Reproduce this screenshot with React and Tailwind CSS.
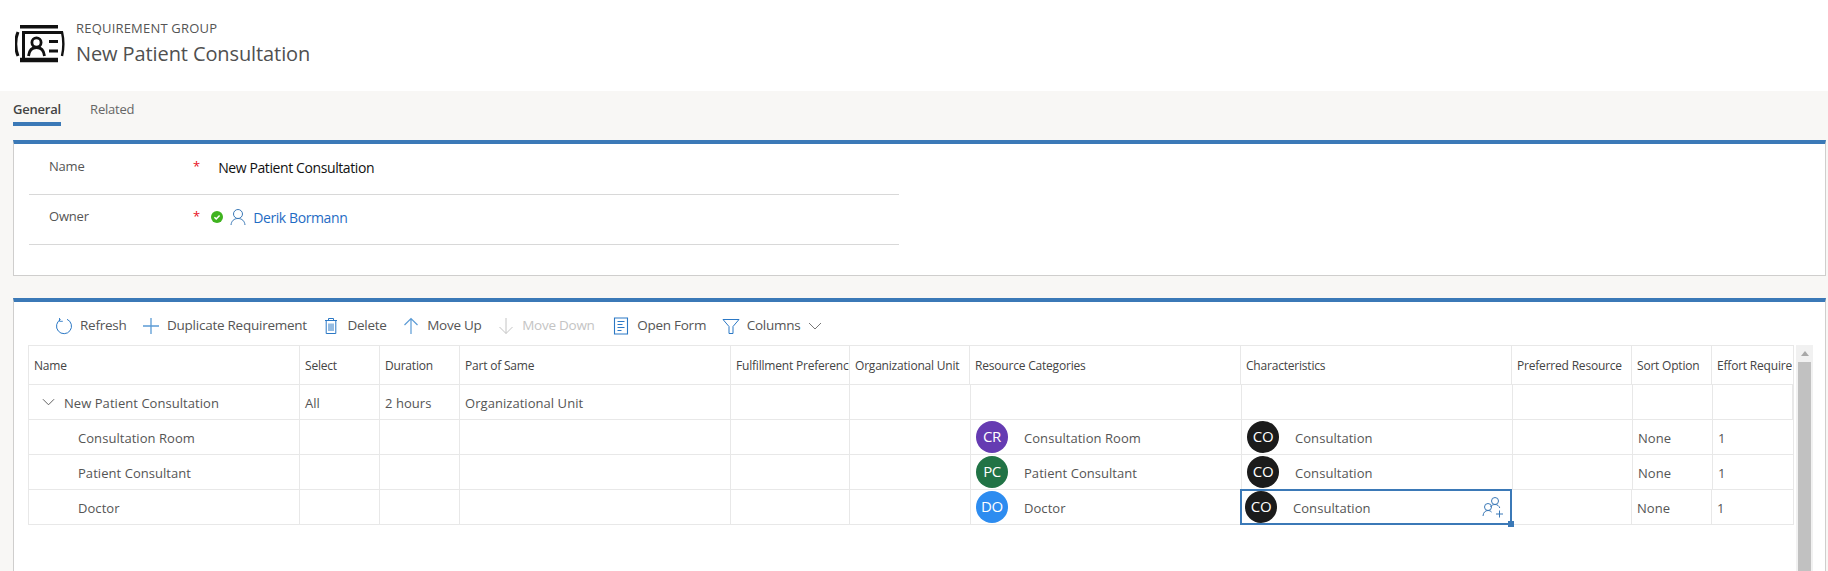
import React from "react";

const FONT = "font-['Open_Sans','Noto_Sans',sans-serif]";

const HEAD_COLS = "grid-cols-[271px_80px_80px_271px_119px_120px_271px_271px_120px_80px_80px]";
const BODY_COLS = "grid-cols-[271px_80px_80px_271px_119px_121px_271px_271px_120px_80px_80px]";
const SELECTED_COLS = "grid-cols-[271px_80px_80px_271px_119px_121px_270px_271px_120px_80px_80px]";

const headers = [
  "Name",
  "Select",
  "Duration",
  "Part of Same",
  "Fulfillment Preference",
  "Organizational Unit",
  "Resource Categories",
  "Characteristics",
  "Preferred Resource",
  "Sort Option",
  "Effort Required",
];

const rows = [
  { name: "Consultation Room", initials: "CR", color: "bg-[#653bb2]" },
  { name: "Patient Consultant", initials: "PC", color: "bg-[#217346]" },
  { name: "Doctor", initials: "DO", color: "bg-[#2d8cf0]", selected: true },
];

const Cell = ({ className = "", children }) => (
  <div className={`flex items-center min-w-0 overflow-hidden whitespace-nowrap border-r border-[#e8e8e8] px-[5px] ${className}`}>
    {children}
  </div>
);

// body text sits a little lower than the avatars
const Txt = ({ children }) => <span className="mt-[3px]">{children}</span>;

const Avatar = ({ color, children }) => (
  <span className={`flex items-center justify-center shrink-0 w-8 h-8 rounded-full pb-[2px] text-white text-[15px] tracking-[-0.4px] ${color}`}>
    {children}
  </span>
);

const RecordIcon = () => (
  <svg viewBox="15 25 50 38" className="w-[50px] h-[38px] shrink-0">
    <path d="M20 26.700h38" stroke="#111" strokeWidth="3.600" fill="none" />
    <path d="M20 60h38" stroke="#111" strokeWidth="4.400" fill="none" />
    <path d="M18 32c-3 7-3 17 0 24" stroke="#111" strokeWidth="3" fill="none" />
    <path d="M62 32c1.600 7 1.600 17 0 24" stroke="#111" strokeWidth="2.400" fill="none" />
    <path d="M23.500 58V32.500H63" stroke="#111" strokeWidth="3" fill="none" />
    <circle cx="36.500" cy="42.500" r="4.600" stroke="#111" strokeWidth="2.800" fill="none" />
    <path d="M28.500 56c.6-5.500 3.600-8.500 8-8.500s7.400 3 8 8.500" stroke="#111" strokeWidth="2.800" fill="none" />
    <path d="M49 41.500h9M49 51h9" stroke="#111" strokeWidth="3" fill="none" />
  </svg>
);

const ToolIcon = ({ children, className = "" }) => (
  <svg viewBox="0 0 18 18" fill="none" stroke="currentColor" strokeWidth="1" className={`w-[18px] h-[18px] shrink-0 ${className}`}>
    {children}
  </svg>
);

const tools = [
  {
    label: "Refresh",
    icon: (
      <>
        <path d="M5.600 2.500A7.500 7.500 0 1 0 12 2.300" />
        <path d="M4.500 1v3.300h3.300" strokeWidth="0.900" />
      </>
    ),
  },
  { label: "Duplicate Requirement", icon: <path d="M9 1v16M1 9h16" stroke="#5b9bd5" strokeWidth="1.300" /> },
  {
    label: "Delete",
    icon: <path d="M3 3.500h12M6.500 3.500V1.500h5v2M4.200 3.500v13h9.600v-13M7 6.500v7.500M9 6.500v7.500M11 6.500v7.500" />,
  },
  { label: "Move Up", icon: <path d="M9 17V1.500M2.500 8L9 1.500 15.500 8" stroke="#5b9bd5" strokeWidth="1.200" /> },
  { label: "Move Down", disabled: true, icon: <path d="M9 1v15.500M2.500 10L9 16.500 15.500 10" /> },
  {
    label: "Open Form",
    className: "ml-[2px]",
    icon: <path d="M2.500 1h13v16h-13zM5.500 4.500h7M5.500 7.500h5M5.500 10.500h7M5.500 13.500h4" strokeWidth="1.100" />,
  },
  { label: "Columns", icon: <path d="M1 2.500h16L11 9.500V16.500H7V9.500z" /> },
];

export default function App() {
  return (
    <div className={`${FONT} flex flex-col w-[1828px] h-[571px] overflow-hidden bg-[#f8f7f5] text-[#444]`}>
      <header className="flex items-center h-[91px] bg-white pl-[15px] pb-[4px]">
        <RecordIcon />
        <div className="ml-[11px]">
          <div className="text-[13px] leading-[16px] tracking-[0.2px] text-[#555]">REQUIREMENT GROUP</div>
          <div className="text-[20px] leading-[28px] mt-[4px] tracking-[-0.1px] text-[#505050]">New Patient Consultation</div>
        </div>
      </header>

      <nav className="flex gap-[29px] px-[13px] h-[49px] shrink-0 text-[13px] tracking-[-0.2px]">
        <div className="flex flex-col h-[35px] justify-end font-semibold text-[#444] border-b-4 border-[#3b79b7] pb-[3px]">General</div>
        <div className="flex flex-col h-[35px] justify-end text-[#666] pb-[7px]">Related</div>
      </nav>

      <section className="ml-[13px] mr-[2px] h-[136px] shrink-0 bg-white border border-t-4 border-[#cfcecd] border-t-[#3b79b7] text-[14px]">
        <div className="w-[870px] ml-[15px] h-[51px] flex border-b border-[#d8d8d8]">
          <div className="w-[164px] pl-[20px] pt-[13px] text-[#555] text-[13px] tracking-[-0.2px]">Name</div>
          <span className="text-[#e81123] pt-[13px] text-[13px]">*</span>
          <div className="pl-[18px] pt-[14px] leading-[20px] text-[#111] font-medium tracking-[-0.4px]">New Patient Consultation</div>
        </div>
        <div className="w-[870px] ml-[15px] h-[50px] flex border-b border-[#d8d8d8]">
          <div className="w-[164px] pl-[20px] pt-[12px] text-[#555] text-[13px] tracking-[-0.2px]">Owner</div>
          <span className="text-[#e81123] pt-[12px] text-[13px]">*</span>
          <div className="flex items-center gap-[7px] pl-[11px] h-[44px]">
            <svg viewBox="0 0 12 12" className="w-3 h-3 shrink-0">
              <circle cx="6" cy="6" r="6" fill="#3fb31f" />
              <path d="M3.400 6.200l1.800 1.700 3.400-3.500" stroke="#fff" strokeWidth="1.500" fill="none" />
            </svg>
            <svg viewBox="0 0 16 18" fill="none" stroke="#3b79b7" strokeWidth="1" className="w-4 h-[18px] shrink-0">
              <circle cx="8" cy="6" r="4.500" />
              <path d="M1 17c.4-4 3-6.500 7-6.500s6.600 2.500 7 6.500" />
            </svg>
            <span className="text-[#1f6cc4] font-medium tracking-[-0.4px]">Derik Bormann</span>
          </div>
        </div>
      </section>

      <section className="flex flex-col flex-1 min-h-0 ml-[13px] mr-[2px] mt-[22px] bg-white border-x border-[#cfcecd] border-t-4 border-t-[#3b79b7]">
        <div className="flex items-center h-[43px] shrink-0 pl-[41px] pt-[4px] gap-[15.500px] text-[13.500px] tracking-[-0.25px] text-[#555]">
          {tools.map((t) => (
            <div key={t.label} className={`flex items-center gap-[7px] ${t.disabled ? "text-[#c4c4c4]" : ""} ${t.className || ""}`}>
              <ToolIcon className={t.disabled ? "text-[#c4c4c4]" : "text-[#2b78c5]"}>{t.icon}</ToolIcon>
              <span>{t.label}</span>
              {t.label === "Columns" && (
                <svg viewBox="0 0 14 8" fill="none" stroke="#777" className="w-[14px] h-2 ml-[1px]">
                  <path d="M1 1l6 6 6-6" />
                </svg>
              )}
            </div>
          ))}
        </div>

        <div className="flex flex-1 min-h-0 pl-[14px]">
          <div className="w-[1766px] shrink-0 text-[13px] tracking-[0.05px] text-[#555]">
            <div className={`grid ${HEAD_COLS} h-[40px] border border-[#e8e8e8] text-[12px] text-[#444] tracking-[-0.2px]`}>
              {headers.map((h, i) => (
                <Cell key={h} className={i === 10 ? "border-r-0" : ""}>
                  <span className="mt-[1px]">{h}</span>
                </Cell>
              ))}
            </div>

            <div className={`grid ${BODY_COLS} h-[35px] border-x border-b border-[#e8e8e8]`}>
              <Cell className="pl-[13px] gap-[9px]">
                <svg viewBox="0 0 14 8" fill="none" stroke="#555" className="w-[13px] h-2 shrink-0">
                  <path d="M1 1l6 6 6-6" />
                </svg>
                <Txt>New Patient Consultation</Txt>
              </Cell>
              <Cell><Txt>All</Txt></Cell>
              <Cell><Txt>2 hours</Txt></Cell>
              <Cell><Txt>Organizational Unit</Txt></Cell>
              <Cell />
              <Cell />
              <Cell />
              <Cell />
              <Cell />
              <Cell />
              <Cell />
            </div>

            {rows.map((r) => (
              <div key={r.name} className={`grid ${r.selected ? SELECTED_COLS : BODY_COLS} h-[35px] border-x border-b border-[#e8e8e8]`}>
                <Cell className="pl-[49px]"><Txt>{r.name}</Txt></Cell>
                <Cell />
                <Cell />
                <Cell />
                <Cell />
                <Cell />
                <Cell className="gap-[16px]">
                  <Avatar color={r.color}>{r.initials}</Avatar>
                  <Txt>{r.name}</Txt>
                </Cell>
                {r.selected ? (
                  <div className="relative flex items-center gap-[16px] px-[3px] border-2 border-[#3b79b7] -my-px -ml-px">
                    <Avatar color="bg-[#1b1b1b]">CO</Avatar>
                    <Txt>Consultation</Txt>
                    <svg viewBox="0 0 22 22" fill="none" stroke="#3b79b7" strokeWidth="1" className="w-[22px] h-[22px] ml-auto mr-[3px]">
                      <circle cx="13" cy="5" r="3.500" />
                      <circle cx="6" cy="11" r="3.500" />
                      <path d="M1 20c.3-3.500 2.200-5.500 5-5.500 1.500 0 2.800.6 3.600 1.600M8.500 11c.8-1.500 2.400-2.500 4.500-2.500 2.400 0 4 1.300 4.800 3.500M14 18h7M17.500 14.500v7" />
                    </svg>
                    <span className="absolute -right-[4px] -bottom-[4px] w-[6px] h-[6px] bg-[#3b79b7]" />
                  </div>
                ) : (
                  <Cell className="gap-[16px]">
                    <Avatar color="bg-[#1b1b1b]">CO</Avatar>
                    <Txt>Consultation</Txt>
                  </Cell>
                )}
                <Cell />
                <Cell><Txt>None</Txt></Cell>
                <Cell className="border-r-0"><Txt>1</Txt></Cell>
              </div>
            ))}
          </div>

          <div className="flex flex-col items-center w-[17px] ml-[2px] shrink-0 bg-[#f1f1f1]">
            <div className="flex items-center justify-center h-[17px] w-full">
              <span className="w-0 h-0 border-x-[4px] border-x-transparent border-b-[5px] border-b-[#a8a8a8]" />
            </div>
            <div className="flex-1 w-[13px] bg-[#c1c1c1]" />
          </div>
        </div>
      </section>
    </div>
  );
}
